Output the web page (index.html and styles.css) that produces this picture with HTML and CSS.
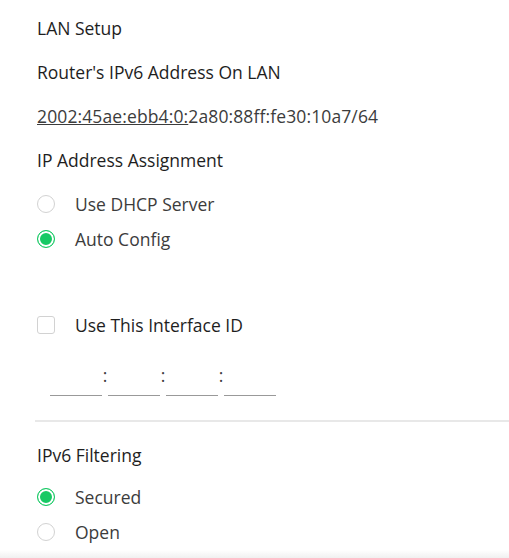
FILE: index.html
```html
<!DOCTYPE html>
<html lang="en">
<head>
    <meta charset="UTF-8">
    <title>LAN Setup</title>
    <link rel="stylesheet" href="styles.css">
</head>
<body>

    <main class="setup">

        <h2 class="heading">LAN Setup</h2>
        <h3 class="heading">Router's IPv6 Address On LAN</h3>
        <p class="address"><a href="#" class="link">2002:45ae:ebb4:0:</a>2a80:88ff:fe30:10a7/64</p>
        <h3 class="heading">IP Address Assignment</h3>

        <div class="options first">
            <label class="option"><span class="radio"></span>Use DHCP Server</label>
            <label class="option"><span class="radio on"></span>Auto Config</label>
        </div>

        <label class="option check-row"><span class="check"></span><span class="dark">Use This Interface ID</span></label>

        <div class="fields">
            <span class="field"></span><span class="colon">:</span>
            <span class="field"></span><span class="colon">:</span>
            <span class="field"></span><span class="colon">:</span>
            <span class="field"></span>
        </div>

        <section class="filtering">
            <h3 class="heading">IPv6 Filtering</h3>
            <div class="options">
                <label class="option"><span class="radio on"></span>Secured</label>
                <label class="option"><span class="radio"></span>Open</label>
            </div>
        </section>

    </main>
    <footer class="shade"></footer>

</body>
</html>
```

FILE: styles.css
```css
*{ padding: 0; margin: 0; box-sizing: border-box; }

:root{
    --text: #1e1e1e;
    --soft: #3c3c3c;
    --line: #e8e8e8;
    --green: #17c964;
}

body{
    font-family: "Open Sans", sans-serif;
    font-size: 17.5px;
    color: var(--text);
    background: #fff;
    overflow: hidden;
}

.setup{
    padding: 6px 0 0 37px;
    height: 550px;
}

.heading{
    font-size: 17.5px;
    font-weight: 500;
    height: 44px;
    line-height: 44px;
}
.address{
    height: 44px;
    line-height: 44px;
    color: var(--soft);
    letter-spacing: 0.12px;
}
.link{ color: var(--soft); text-decoration: underline; text-decoration-thickness: 1px; }

/*   RADIOS / CHECKBOX   */

.options{ display: flex; flex-direction: column; }
.first{ margin-top: 4px; }

.option{
    display: flex;
    align-items: center;
    height: 35px;
    color: var(--soft);
}
.radio{
    width: 18px;
    height: 18px;
    border: 1px solid #d2d2d2;
    border-radius: 50%;
    margin-right: 20px;
}
.radio.on{
    border: 1px solid var(--green);
    background: var(--green);
    box-shadow: inset 0 0 0 2px #fff;
}
.check{
    width: 18px;
    height: 18px;
    border: 1px solid #d2d2d2;
    border-radius: 3px;
    margin-right: 20px;
}
.check-row{ margin-top: 51px; }
.dark{ color: var(--text); }

/*   INTERFACE ID   */

.fields{
    display: flex;
    align-items: flex-start;
    margin: 26px 0 0 13px;
    height: 28px;
}
.field{
    width: 52px;
    height: 28px;
    border-bottom: 1px solid #999;
}
.colon{
    width: 6px;
    text-align: center;
    line-height: 14px;
    color: var(--soft);
}

/*   FILTERING   */

.filtering{
    margin: 24px 0 0 -2px;
    padding: 11px 0 0 2px;
    border-top: 2px solid var(--line);
}
.filtering .options{ margin-top: 2px; }

.shade{
    height: 8px;
    background: linear-gradient(#fff, #f0f0f0);
}
```
